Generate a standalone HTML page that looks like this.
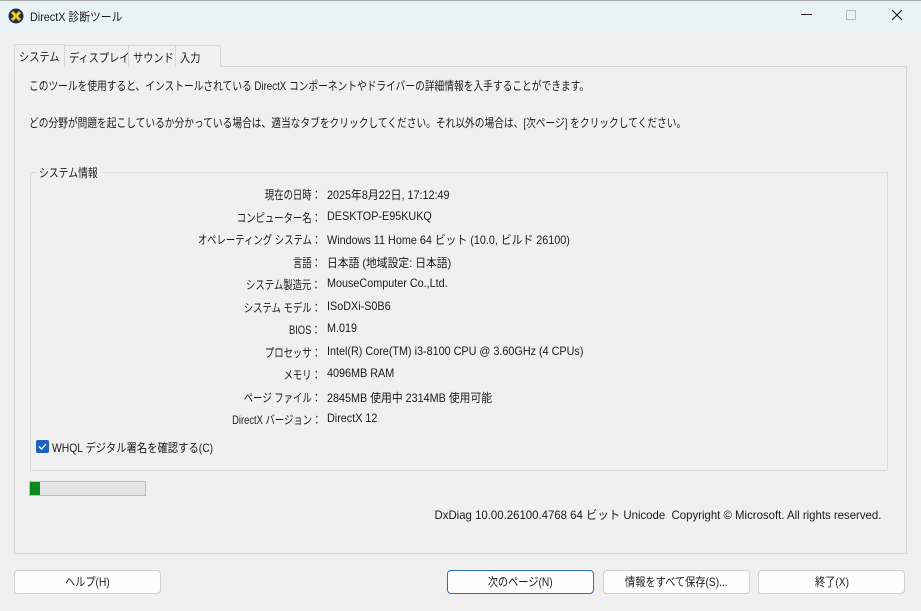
<!DOCTYPE html>
<html><head><meta charset="utf-8"><style>
*{margin:0;padding:0;box-sizing:border-box}
body{width:921px;height:611px;background:#f0f0f0;font-family:"Liberation Sans","Noto Sans CJK JP",sans-serif;font-size:12px;color:#1a1a1a;position:relative;overflow:hidden}
.a{position:absolute;white-space:nowrap}
.sl{transform-origin:left center}
.sr{transform-origin:right center}
#title{left:0;top:0;width:921px;height:31px;background:#e9f3f6;border-top:1px solid #aaa}
#panel{left:14px;top:66px;width:893px;height:488px;background:#f0f0f0;border:1px solid #d6d6d6}
.tab{top:45px;height:22px;border:1px solid #d9d9d9;border-bottom:none;background:#f0f0f0;padding-top:3px;font-size:12px;overflow:hidden}
.tab span{display:inline-block;transform:scaleX(.85);transform-origin:left center;margin-left:4px}
#group{left:30px;top:172px;width:858px;height:299px;border:1px solid #dcdcdc}
.lab{right:600px;text-align:right;transform:scaleX(.78);transform-origin:right center}
.val{left:327px;transform:scaleX(.9);transform-origin:left center}
.btn{top:570px;width:147px;height:24px;background:#fdfdfd;border:1px solid #d0d0d0;border-radius:4px;text-align:center;line-height:22px}
.btn span{display:inline-block;transform:scaleX(.85)}
</style></head><body>
<div class="a" id="title"></div>
<svg class="a" style="left:8px;top:8px" width="16" height="16" viewBox="0 0 16 16"><circle cx="8" cy="8" r="7.5" fill="#2a2a4a"/><path d="M4 4 L12 12 M12 4 L4 12" stroke="#e8d020" stroke-width="3"/></svg>
<div class="a sl" style="left:30px;top:8px;transform:scaleX(.9)">DirectX 診断ツール</div>
<div class="a" style="left:801px;top:14px;width:11px;border-top:1px solid #222"></div>
<div class="a" style="left:846px;top:10px;width:10px;height:10px;border:1px solid #bbb"></div>
<svg class="a" style="left:891px;top:9px" width="12" height="12" viewBox="0 0 12 12"><path d="M1 1L11 11M11 1L1 11" stroke="#222" stroke-width="1.2"/></svg>
<div class="a" id="panel"></div>
<div class="a tab" style="left:14px;top:44px;height:23px;width:51px;z-index:2"><span>システム</span></div>
<div class="a tab" style="left:64px;width:65px"><span>ディスプレイ</span></div>
<div class="a tab" style="left:128px;width:48px"><span>サウンド</span></div>
<div class="a tab" style="left:175px;width:46px"><span>入力</span></div>
<div class="a sl" style="left:29px;top:77px;transform:scaleX(.81)">このツールを使用すると、インストールされている DirectX コンポーネントやドライバーの詳細情報を入手することができます。</div>
<div class="a sl" style="left:29px;top:114px;transform:scaleX(.81)">どの分野が問題を起こしているか分かっている場合は、適当なタブをクリックしてください。それ以外の場合は、[次ページ] をクリックしてください。</div>
<div class="a" id="group"></div>
<div class="a" style="left:36px;top:164px;background:#f0f0f0;padding:0 3px;width:66px;overflow:hidden"><span style="display:inline-block;transform:scaleX(.82);transform-origin:left">システム情報</span></div>
<div class="a lab" style="top:186px">現在の日時：</div><div class="a val" style="top:186px">2025年8月22日, 17:12:49</div>
<div class="a lab" style="top:209px">コンピューター名：</div><div class="a val" style="top:209px">DESKTOP-E95KUKQ</div>
<div class="a lab" style="top:231px">オペレーティング システム：</div><div class="a val" style="top:231px">Windows 11 Home 64 ビット (10.0, ビルド 26100)</div>
<div class="a lab" style="top:254px">言語：</div><div class="a val" style="top:254px">日本語 (地域設定: 日本語)</div>
<div class="a lab" style="top:276px">システム製造元：</div><div class="a val" style="top:276px">MouseComputer Co.,Ltd.</div>
<div class="a lab" style="top:299px">システム モデル：</div><div class="a val" style="top:299px">ISoDXi-S0B6</div>
<div class="a lab" style="top:321px">BIOS：</div><div class="a val" style="top:321px">M.019</div>
<div class="a lab" style="top:344px">プロセッサ：</div><div class="a val" style="top:344px">Intel(R) Core(TM) i3-8100 CPU @ 3.60GHz (4 CPUs)</div>
<div class="a lab" style="top:366px">メモリ：</div><div class="a val" style="top:366px">4096MB RAM</div>
<div class="a lab" style="top:389px">ページ ファイル：</div><div class="a val" style="top:389px">2845MB 使用中 2314MB 使用可能</div>
<div class="a lab" style="top:411px">DirectX バージョン：</div><div class="a val" style="top:411px">DirectX 12</div>
<div class="a" style="left:36px;top:440px;width:13px;height:13px;background:#1e62c0;border-radius:2px"></div>
<svg class="a" style="left:36px;top:440px" width="13" height="13" viewBox="0 0 13 13"><path d="M3 6.5L5.5 9L10 4" stroke="#fff" stroke-width="1.3" fill="none"/></svg>
<div class="a sl" style="left:52px;top:439px;transform:scaleX(.86)">WHQL デジタル署名を確認する(C)</div>
<div class="a" style="left:29px;top:481px;width:117px;height:15px;background:#e6e6e6;border:1px solid #bcbcbc"></div>
<div class="a" style="left:30px;top:482px;width:10px;height:13px;background:#0a8a1a"></div>
<div class="a sr" style="right:40px;top:506px;transform:scaleX(.95)">DxDiag 10.00.26100.4768 64 ビット Unicode &nbsp;Copyright © Microsoft. All rights reserved.</div>
<div class="a btn" style="left:14px"><span>ヘルプ(H)</span></div>
<div class="a btn" style="left:447px;border:1px solid #2a6fb8"><span>次のページ(N)</span></div>
<div class="a btn" style="left:603px"><span>情報をすべて保存(S)...</span></div>
<div class="a btn" style="left:758px"><span>終了(X)</span></div>
</body></html>
